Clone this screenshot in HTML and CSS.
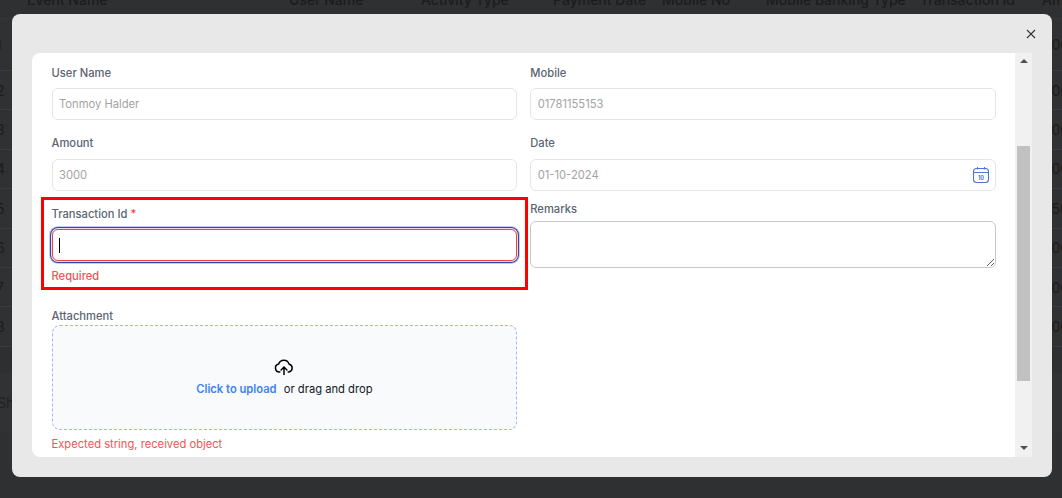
FILE: index.html
```html
<!DOCTYPE html>
<html lang="en">
<head>
<meta charset="utf-8">
<title>Payment form</title>
<link rel="stylesheet" href="styles.css">
</head>
<body>
<main class="page">
  <div class="row head">
    <span></span><span>Event Name</span><span>User Name</span><span>Activity Type</span><span>Payment Date</span><span>Mobile No</span><span>Mobile Banking Type</span><span>Transaction Id</span><span>Amount</span>
  </div>
  <div class="row first"><span>1</span><span class="amt">1000</span></div>
  <div class="row"><span>2</span><span class="amt">1000</span></div>
  <div class="row"><span>3</span><span class="amt">1900</span></div>
  <div class="row"><span>4</span><span class="amt">1900</span></div>
  <div class="row"><span>5</span><span class="amt">1050</span></div>
  <div class="row"><span>6</span><span class="amt">1000</span></div>
  <div class="row"><span>7</span><span class="amt">1000</span></div>
  <div class="row"><span>8</span><span class="amt">1000</span></div>
  <div class="spacer"></div>
  <div class="footer">Showing 1 to 8</div>
</main>

<section class="modal">
  <header class="modal-head">
    <button class="close" type="button" aria-label="Close">
      <svg viewBox="0 0 12 12" width="12" height="12"><path d="M2 2l8 8M10 2l-8 8"/></svg>
    </button>
  </header>
  <div class="modal-body">
    <form class="form">
      <div class="field spaced">
        <label class="label first-line">User Name</label>
        <div class="input">Tonmoy Halder</div>
      </div>
      <div class="field spaced">
        <label class="label first-line">Mobile</label>
        <div class="input">01781155153</div>
      </div>
      <div class="field">
        <label class="label">Amount</label>
        <div class="input">3000</div>
      </div>
      <div class="field">
        <label class="label">Date</label>
        <div class="input date">
          <span>01-10-2024</span>
          <svg class="cal" viewBox="0 0 18 18" width="18" height="18">
            <rect x="1.5" y="2.5" width="15" height="14" rx="3"/>
            <path d="M1.5 6.5h15M5.5 1v2.500M12.500 1v2.500"/>
            <text x="9" y="13.500" text-anchor="middle">10</text>
          </svg>
        </div>
      </div>
      <div class="field txn">
        <label class="label tight">Transaction Id <span class="req">*</span></label>
        <div class="input focus"><span class="caret"></span></div>
        <p class="error">Required</p>
        <div class="mark"></div>
      </div>
      <div class="field">
        <label class="label remarks-label">Remarks</label>
        <textarea class="remarks"></textarea>
      </div>
      <div class="field attach">
        <label class="label att-label">Attachment</label>
        <div class="drop">
          <svg class="cloud" viewBox="0 0 24 24" width="20" height="20">
            <path d="M12 21v-9M8.500 15.500 12 12l3.500 3.500"/>
            <path d="M7 18H6.500A4.800 4.800 0 0 1 5.600 8.500 6.500 6.500 0 0 1 18 8.300 5 5 0 0 1 18 18H17"/>
          </svg>
          <p class="drop-text"><strong>Click to upload</strong> <span>or drag and drop</span></p>
        </div>
        <p class="error att-error">Expected string, received object</p>
      </div>
    </form>
    <div class="scrollbar" aria-hidden="true">
      <span class="arrow up"></span>
      <span class="thumb"></span>
      <span class="arrow down"></span>
    </div>
  </div>
</section>
</body>
</html>
```
FILE: styles.css
```css
* { box-sizing: border-box; }
html, body { margin: 0; height: 100%; }
body {
  overflow: hidden;
  background: #2f3032;
  font-family: Inter, "Liberation Sans", sans-serif;
}

/* dimmed page behind the dialog */
.page { height: 498px; color: #1b1c1e; font-size: 14px; overflow: hidden; }
.row {
  display: grid;
  grid-template-columns: 31px 262px 132px 132px 109px 104px 154px 122px 100px;
  margin-left: -4px;
  width: 1200px;
  height: 39.375px;
  align-items: center;
  border-bottom: 1px solid #3a3b47;
  background: #303133;
}
.row.head {
  height: 30px;
  margin-top: -11px;
  padding-bottom: 8px;
  font-weight: 500;
  color: #1b1c1e;
  border-bottom: 1px solid #35363c;
  background: #2f3032;
}
.row.first { height: 52px; }
.amt { grid-column: 9; margin-left: -5px; }
.spacer { height: 26px; background: #2e2f31; }
.footer {
  height: 60px;
  line-height: 60px;
  text-indent: -3px;
  background: #313234;
  color: #1a2225;
  white-space: nowrap;
}

/* dialog */
.modal {
  position: fixed;
  left: 12px;
  top: 14px;
  width: 1040px;
  height: 463px;
  display: flex;
  flex-direction: column;
  background: #e8e8e8;
  border-radius: 8px;
}
.modal-head {
  flex: 0 0 39px;
  display: flex;
  align-items: center;
  justify-content: flex-end;
  padding-right: 15px;
}
.close { display: flex; padding: 0; border: 0; background: none; }
.close svg { fill: none; stroke: #2b2b2b; stroke-width: 1.1; }

.modal-body {
  flex: 1;
  display: flex;
  margin: 0 20px 20px;
  background: #fff;
  border-radius: 8px 0 0 8px;
  overflow: hidden;
}
.form {
  flex: 1;
  display: grid;
  grid-template-columns: 1fr 1fr;
  column-gap: 13px;
  row-gap: 10px;
  align-content: start;
  padding: 12px 19px 0 19.5px;
  overflow: hidden;
}
.field { position: relative; min-width: 0; }
.field.spaced { padding-bottom: 5px; }
.label {
  display: block;
  height: 16px;
  margin-bottom: 8px;
  font-size: 11.2px;
  line-height: 16px;
  font-weight: 500;
  color: #5b6472;
}
.label.first-line { margin-bottom: 7px; }
.input {
  display: flex;
  align-items: center;
  height: 32px;
  padding: 0 6.500px;
  border: 1px solid #e5e5e5;
  border-radius: 6px;
  font-size: 11.2px;
  color: #a3a3a3;
  background: #fff;
}
.input.date { justify-content: space-between; padding-right: 5px; }
.cal { fill: none; stroke: #5570d8; stroke-width: 1.100; }
.cal text {
  fill: #5570d8;
  stroke: none;
  font-family: Inter, sans-serif;
  font-size: 5.500px;
  font-weight: 700;
}

.txn { padding-top: 5px; }
.label.tight { margin-bottom: 7px; }
.req { color: #ef4444; }
.input.focus {
  border-color: #ef4444;
  box-shadow: 0 0 0 1px #f3d9e2, 0 0 0 2px #3147b0, 0 0 0 3px #c5cff3;
}
.caret { width: 1px; height: 15px; background: #000; }
.error {
  margin: 7px 0 0;
  font-size: 11.2px;
  line-height: 16px;
  font-weight: 500;
  color: #f25555;
}
.mark {
  position: absolute;
  left: -10.500px;
  right: -10.250px;
  top: -4px;
  bottom: -6px;
  border: 3px solid #f00;
  pointer-events: none;
}

.label.remarks-label { margin-bottom: 4px; }
.remarks {
  display: block;
  width: 100%;
  height: 47px;
  padding: 7px;
  border: 1px solid #c8c8c8;
  border-radius: 6px;
  background: #fff;
  outline: none;
  resize: both;
  font: 11.2px Inter, sans-serif;
}

.attach { grid-column: 1; margin-top: 14px; }
.label.att-label { margin-bottom: 1px; }
.drop {
  display: flex;
  flex-direction: column;
  align-items: center;
  justify-content: center;
  gap: 4px;
  height: 105px;
  padding-bottom: 1px;
  border: 1px dashed #a5b4fc;
  border-radius: 8px;
  background: #f9fafb;
}
.cloud { fill: none; stroke: #000; stroke-width: 1.800; stroke-linecap: round; stroke-linejoin: round; }
.drop-text { margin: 0; font-size: 11.2px; line-height: 16px; color: #111827; }
.drop-text strong { margin-right: 4px; font-weight: 600; color: #3b82f6; }
.error.att-error { margin-top: 6px; font-weight: 400; }

/* scrollbar */
.scrollbar {
  flex: 0 0 17px;
  display: flex;
  flex-direction: column;
  align-items: center;
  background: #f1f1f1;
}
.arrow { width: 0; height: 0; border: 4px solid transparent; }
.arrow.up { margin-top: 6px; border-top: 0; border-bottom: 4px solid #505050; }
.thumb { width: 13px; height: 235px; margin-top: 83px; background: #c1c1c1; }
.arrow.down { margin-top: 65px; border-bottom: 0; border-top: 4px solid #505050; }
```
